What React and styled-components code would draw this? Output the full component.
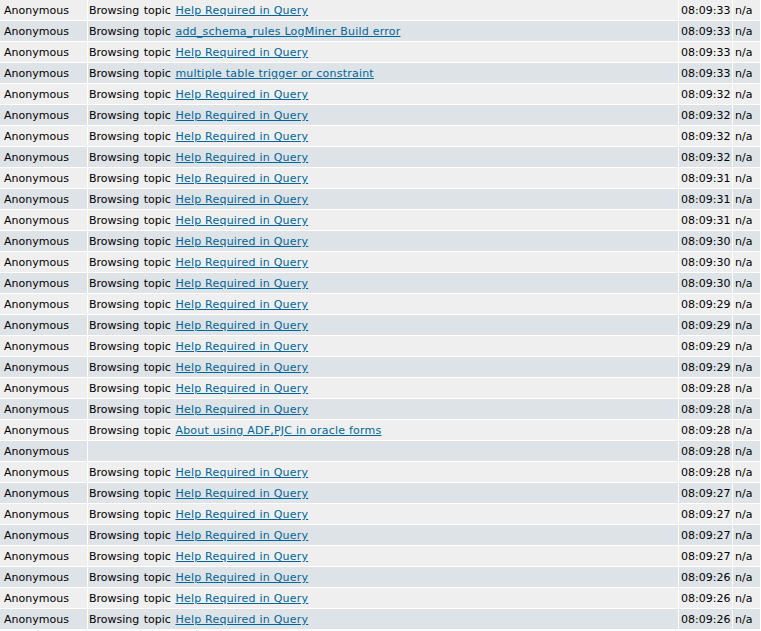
import React from "react";
import styled, { createGlobalStyle } from "styled-components";

const Global = createGlobalStyle`
  body {
    margin: 0;
    background: #ffffff;
    font-family: "DejaVu Sans", Verdana, sans-serif;
  }
`;

const Table = styled.table`
  width: calc(100% + 1px);
  margin: -1px 0 0 -1px;
  border-collapse: separate;
  border-spacing: 1px;
  table-layout: fixed;
  background: #ffffff;
  font-size: 11px;
  line-height: 14px;
  color: #000000;
`;

const Row = styled.tr`
  background: ${(p) => (p.$alt ? "#dee3e7" : "#efefef")};
`;

const Cell = styled.td`
  height: 14px;
  padding: 4px 2px 2px ${(p) => p.$pad || 2}px;
  white-space: nowrap;
  overflow: hidden;
  word-spacing: ${(p) => (p.$wide ? "1px" : "0")};
`;

const TopicLink = styled.a`
  color: #006699;
  text-decoration: underline;
  letter-spacing: 0.22px;
  word-spacing: 0;
`;

const help = "Help Required in Query";
const rows = [
  [help, "08:09:33"],
  ["add_schema_rules LogMiner Build error", "08:09:33"],
  [help, "08:09:33"],
  ["multiple table trigger or constraint", "08:09:33"],
  [help, "08:09:32"],
  [help, "08:09:32"],
  [help, "08:09:32"],
  [help, "08:09:32"],
  [help, "08:09:31"],
  [help, "08:09:31"],
  [help, "08:09:31"],
  [help, "08:09:30"],
  [help, "08:09:30"],
  [help, "08:09:30"],
  [help, "08:09:29"],
  [help, "08:09:29"],
  [help, "08:09:29"],
  [help, "08:09:29"],
  [help, "08:09:28"],
  [help, "08:09:28"],
  ["About using ADF,PJC in oracle forms", "08:09:28"],
  [null, "08:09:28"],
  [help, "08:09:28"],
  [help, "08:09:27"],
  [help, "08:09:27"],
  [help, "08:09:27"],
  [help, "08:09:27"],
  [help, "08:09:26"],
  [help, "08:09:26"],
  [help, "08:09:26"],
];

export default function App() {
  return (
    <>
      <Global />
      <Table>
        <colgroup>
          <col style={{ width: 87 }} />
          <col />
          <col style={{ width: 53 }} />
          <col style={{ width: 27 }} />
        </colgroup>
        <tbody>
          {rows.map(([topic, time], i) => (
            <Row key={i} $alt={i % 2 === 1}>
              <Cell $pad={4}>Anonymous</Cell>
              <Cell $pad={1} $wide>
                {topic && (
                  <>
                    Browsing topic <TopicLink href="#">{topic}</TopicLink>
                  </>
                )}
              </Cell>
              <Cell>{time}</Cell>
              <Cell>n/a</Cell>
            </Row>
          ))}
        </tbody>
      </Table>
    </>
  );
}
